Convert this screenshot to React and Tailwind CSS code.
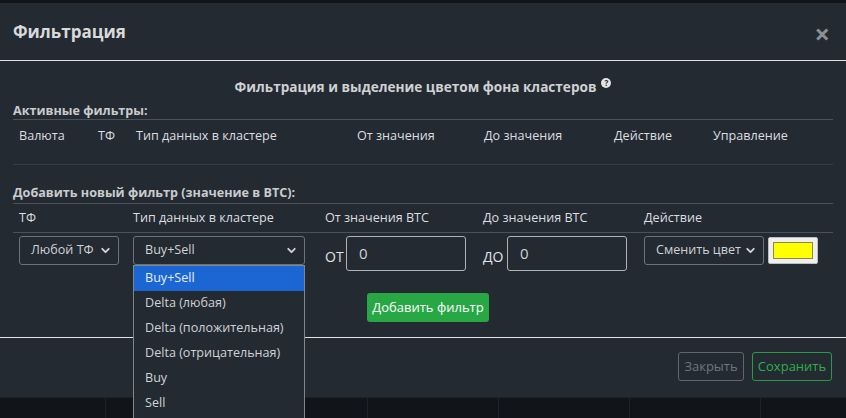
import { ChevronDown } from 'lucide-react';

const OPTIONS = ['Buy+Sell', 'Delta (любая)', 'Delta (положительная)', 'Delta (отрицательная)', 'Buy', 'Sell'];

function Select({ label, className }) {
    return (
        <div className={`h-[29px] border border-[#6c737b] rounded-[3px] flex items-center justify-between pl-[11px] pr-[6px] text-[#cfd2d6] ${className}`}>
            <span>{label}</span>
            <ChevronDown className="w-[13px] h-[13px] shrink-0" strokeWidth={3.5} />
        </div>
    );
}

function NumInput() {
    return (
        <div className="w-[120px] h-[35px] border border-[#aeb3b8] rounded-[3px] flex items-center pl-[12px] text-[#cfd2d6] text-[15px]">0</div>
    );
}

export default function App() {
    return (
        <div className="h-[418px] overflow-hidden bg-[#111418] flex flex-col text-[12.6px]" style={{ fontFamily: '"Open Sans", "Noto Sans", sans-serif' }}>
            <div className="h-[3px] shrink-0 bg-[#121417]"></div>

            <div className="h-[394px] shrink-0 bg-[#232a31] flex flex-col relative">
                {/* header */}
                <div className="h-[58px] shrink-0 border-b border-[#dfe3e6] flex items-center justify-between pl-[13px] pr-[16px]">
                    <h2 className="text-[17px] font-bold text-[#d9dadb]">Фильтрация</h2>
                    <span className="text-[27px] font-bold text-[#8c9094] leading-none mt-[4px]">×</span>
                </div>

                {/* body */}
                <div className="h-[276px] shrink-0 px-[13px] pt-[16px] text-[#d6d8da]">
                    <div className="h-[20px] flex items-center justify-center font-bold text-[13.6px] text-[#cfd1d3]">
                        Фильтрация и выделение цветом фона кластеров
                        <span className="ml-[5px] -mt-[8px] w-[10px] h-[10px] rounded-full bg-[#e4e4e4] text-[#232a31] text-[8px] leading-none font-bold flex items-center justify-center">?</span>
                    </div>
                    <div className="h-[22px] flex items-end leading-[16px] font-bold text-[#c9cbcd]">Активные фильтры:</div>
                    <div className="border-t border-[#4a5159] h-[46px] border-b border-b-[#363d45] flex pt-[7px] text-[#dcdee0]">
                        <div className="w-[79px] pl-[6px]">Валюта</div>
                        <div className="w-[38px] pl-[6px]">ТФ</div>
                        <div className="w-[221px] pl-[6px]">Тип данных в кластере</div>
                        <div className="w-[127px] pl-[6px]">От значения</div>
                        <div className="w-[130px] pl-[6px]">До значения</div>
                        <div className="w-[99px] pl-[6px]">Действие</div>
                        <div className="pl-[6px]">Управление</div>
                    </div>

                    <div className="mt-[19px] h-[19px] flex items-center font-bold text-[#c9cbcd]">Добавить новый фильтр (значение в BTC):</div>
                    <div className="border-t border-[#4a5159] h-[30px] border-b border-b-[#4a5159] flex items-center text-[#dcdee0]">
                        <div className="w-[114px] pl-[6px]">ТФ</div>
                        <div className="w-[192px] pl-[6px]">Тип данных в кластере</div>
                        <div className="w-[158px] pl-[6px]">От значения BTC</div>
                        <div className="w-[161px] pl-[6px]">До значения BTC</div>
                        <div className="pl-[6px]">Действие</div>
                    </div>

                    <div className="flex pt-[3px] items-start">
                        <div className="w-[114px] pl-[6px]">
                            <Select label="Любой ТФ" className="w-[100px]" />
                        </div>
                        <div className="w-[192px] pl-[6px] relative">
                            <Select label="Buy+Sell" className="w-[172px]" />
                            <div className="absolute left-[6px] top-[29px] w-[172px] h-[160px] z-10 bg-[#232a31] border border-[#80868c] text-[#cfd2d6]">
                                {OPTIONS.map((o, i) => (
                                    <div key={o} className={`h-[25px] flex items-center pl-[11px] ${i === 0 ? 'bg-[#1b66d2] text-[#e8eef8]' : ''}`}>{o}</div>
                                ))}
                            </div>
                        </div>
                        <div className="w-[158px] pl-[6px] flex items-center gap-[1px]">
                            <span className="text-[14px] text-[#e2e4e6] w-[20px] mt-[6px]">ОТ</span>
                            <NumInput />
                        </div>
                        <div className="w-[161px] pl-[6px] flex items-center gap-[1px]">
                            <span className="text-[14px] text-[#e2e4e6] w-[23px] mt-[6px]">ДО</span>
                            <NumInput />
                        </div>
                        <div className="pl-[6px] flex items-start gap-[4px]">
                            <Select label="Сменить цвет" className="w-[120px]" />
                            <div className="w-[50px] h-[27px] mt-[1px] bg-[#efefef] border border-[#bdbdbd] rounded-[2px] flex items-center justify-center">
                                <div className="w-[40px] h-[17px] bg-[#ffff00] border border-[#8a8a50]"></div>
                            </div>
                        </div>
                    </div>

                    <div className="flex justify-center mt-[22px]">
                        <button className="ml-[10px] h-[29px] w-[122px] rounded-[3px] bg-[#28a745] text-white text-[13px]">Добавить фильтр</button>
                    </div>
                </div>

                {/* footer */}
                <div className="flex-1 border-t border-[#dfe3e6] flex items-start justify-end gap-[8px] pt-[14px] pr-[14px]">
                    <button className="h-[29px] w-[66px] rounded-[3px] border border-[#5f666d] text-[#6f767d] text-[13px]">Закрыть</button>
                    <button className="h-[29px] w-[80px] rounded-[3px] border border-[#2a9a45] text-[#2fae4f] text-[13px]">Сохранить</button>
                </div>
            </div>

            <div className="flex-1 flex border-t border-[#1c2025]">
                {[0, 1, 2, 3, 4, 5, 6].map((i) => (
                    <div key={i} className={`h-full shrink-0 ${i === 0 ? 'w-[105px]' : 'w-[131px] border-l border-[#1f242a]'}`}></div>
                ))}
            </div>
        </div>
    );
}
